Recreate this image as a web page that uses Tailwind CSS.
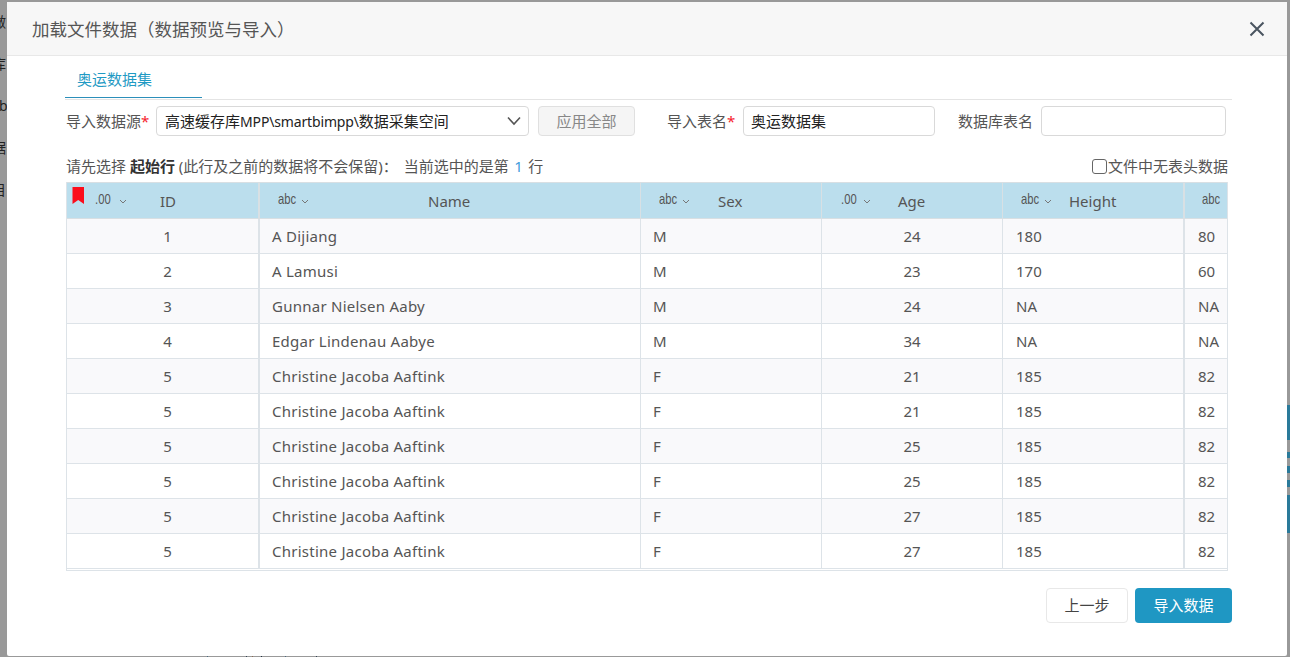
<!DOCTYPE html>
<html lang="zh-CN">
<head>
    <meta charset="UTF-8">
    <title>加载文件数据</title>
    <script src="https://cdn.jsdelivr.net/npm/@tailwindcss/browser@4"></script>
</head>
<body class="bg-[#999999] h-[657px] w-[1290px] overflow-hidden relative font-['Noto_Sans','Noto_Sans_CJK_SC',sans-serif] text-[#333333] text-[15px]">

    <!-- page behind the overlay -->
    <div class="absolute left-0 top-[12px] w-[7px] text-[14px] leading-[20px] text-[#222222] overflow-hidden">
        <div class="h-[42px] -ml-[8px] whitespace-nowrap">做</div>
        <div class="h-[42px] -ml-[8px] whitespace-nowrap">库</div>
        <div class="h-[42px] -ml-[1px] whitespace-nowrap">b</div>
        <div class="h-[42px] -ml-[8px] whitespace-nowrap">据</div>
        <div class="h-[42px] -ml-[8px] whitespace-nowrap">目</div>
    </div>
    <div class="absolute left-[1287px] top-[405px] w-[3px] flex flex-col">
        <div class="h-[35px] bg-[#2a7a9a]"></div>
        <div class="h-[12px]"></div>
        <div class="h-[6px] bg-[#2a7a9a]"></div>
        <div class="h-[8px]"></div>
        <div class="h-[7px] bg-[#2a7a9a]"></div>
        <div class="h-[7px]"></div>
        <div class="h-[7px] bg-[#2a7a9a]"></div>
        <div class="h-[8px]"></div>
        <div class="h-[38px] bg-[#2a7a9a]"></div>
    </div>
    <div class="absolute left-[207px] top-[656px] w-[1px] h-[1px] bg-[#4a6a80]"></div>
    <div class="absolute left-[246px] top-[656px] w-[1px] h-[1px] bg-[#334455]"></div>
    <div class="absolute left-[252px] top-[656px] w-[1px] h-[1px] bg-[#8a6a50]"></div>
    <div class="absolute left-[261px] top-[656px] w-[1px] h-[1px] bg-[#223344]"></div>
    <div class="absolute left-[285px] top-[656px] w-[1px] h-[1px] bg-[#4a6a80]"></div>
    <div class="absolute left-[316px] top-[656px] w-[1px] h-[1px] bg-[#334455]"></div>

    <!-- modal -->
    <div class="absolute left-[7px] top-[2px] w-[1280px] h-[654px] bg-white rounded-[2px] flex flex-col">
        <header class="h-[54px] shrink-0 bg-[#f7f7f7] border-b border-[#e8e8e8] flex items-center justify-between pl-[25px] pr-[22px]">
            <h1 class="text-[17.5px] leading-[24px] text-[#555555]">加载文件数据（数据预览与导入）</h1>
            <svg width="16" height="16" viewBox="0 0 16 16" fill="none" stroke="#4a5560" stroke-width="2">
                <path d="M1.5 1.5L14.5 14.5M14.5 1.5L1.5 14.5"/>
            </svg>
        </header>

        <div class="pl-[58px] pr-[55px] flex flex-col">
            <!-- tabs -->
            <div class="h-[44px] border-b border-[#e4e4e4] flex">
                <div class="w-[137px] h-[42px] border-b border-[#2b8fba] text-[#1f9ac4] leading-[46px] pl-[12px]">奥运数据集</div>
            </div>

            <!-- source row -->
            <div class="flex items-center h-[30px] mt-[6px] pl-[1px] pr-[6px]">
                <label class="w-[90px] text-[#555555]">导入数据源<span class="text-[#f5222d]">*</span></label>
                <div class="w-[373px] h-[30px] border border-[#d9d9d9] rounded-[4px] flex items-center justify-between pl-[8px] pr-[6px] text-[#222222]">
                    <span>高速缓存库<span class="text-[14px] tracking-[-0.15px]">MPP\smartbimpp\</span>数据采集空间</span>
                    <svg width="16" height="10" viewBox="0 0 16 10" fill="none" stroke="#555555" stroke-width="1.6"><path d="M2 1.5L8 8L14 1.5"/></svg>
                </div>
                <button class="w-[97px] h-[30px] ml-[9px] bg-[#f5f5f5] border border-[#e0e0e0] rounded-[4px] text-[#888888]">应用全部</button>
                <label class="ml-[32px] w-[76px] whitespace-nowrap text-[#555555]">导入表名<span class="text-[#f5222d]">*</span></label>
                <div class="w-[192px] h-[30px] border border-[#d9d9d9] rounded-[4px] flex items-center pl-[7px] text-[#222222]">奥运数据集</div>
                <label class="ml-[23px] w-[83px] whitespace-nowrap text-[#555555]">数据库表名</label>
                <div class="w-[185px] h-[30px] border border-[#d9d9d9] rounded-[4px]"></div>
            </div>

            <!-- start row hint -->
            <div class="flex items-center justify-between h-[20px] mt-[20px] mb-[1px] pl-[1px] pr-[4px] text-[#555555] text-[15px] leading-[20px]">
                <p>请先选择 <b class="font-bold text-[#333333]">起始行</b> (此行及之前的数据将不会保留)： <span class="ml-[2px]">当前选中的是第</span> <span class="text-[#3f9ddb] mx-[1.5px]">1</span> 行</p>
                <label class="flex items-center"><span class="w-[15px] h-[15px] mr-[1px] border border-[#666666] rounded-[3px] bg-white"></span>文件中无表头数据</label>
            </div>

            <!-- preview table -->
            <div id="preview" class="mt-[5px] ml-[1px] w-[1162px] h-[389px] border border-[#dde3e8] border-t-0 overflow-hidden">
                <div class="flex h-[37px] bg-[#bbdeed] border-y border-[#d8dfe3] text-[#555555] text-[15px]">
                    <div class="w-[193px] border-r-2 border-[#d8e0e4] relative flex items-center">
                        <svg class="absolute left-[5px] top-[4px]" width="13" height="18" viewBox="0 0 13 18"><path d="M0.5 0H12V17L6.2 13L0.5 17Z" fill="#fb0d1b"/></svg>
                        <span class="absolute left-[28px] top-[8px] text-[15px] leading-[16px] scale-x-75 origin-left font-['Liberation_Sans',sans-serif]">.00</span>
                        <svg class="absolute left-[52px] top-[16px]" width="8" height="5" viewBox="0 0 8 5" fill="none" stroke="#777777"><path d="M1 1L4 4L7 1"/></svg>
                        <span class="absolute left-[93px] top-[7px] leading-[22px]">ID</span>
                    </div>
                    <div class="w-[381px] border-r border-[#d8e0e4] relative">
                        <span class="absolute left-[18px] top-[8px] text-[15px] leading-[16px] scale-x-75 origin-left font-['Liberation_Sans',sans-serif]">abc</span>
                        <svg class="absolute left-[41px] top-[16px]" width="8" height="5" viewBox="0 0 8 5" fill="none" stroke="#777777"><path d="M1 1L4 4L7 1"/></svg>
                        <span class="absolute left-[168px] top-[7px] leading-[22px]">Name</span>
                    </div>
                    <div class="w-[181px] border-r border-[#d8e0e4] relative">
                        <span class="absolute left-[18px] top-[8px] text-[15px] leading-[16px] scale-x-75 origin-left font-['Liberation_Sans',sans-serif]">abc</span>
                        <svg class="absolute left-[41px] top-[16px]" width="8" height="5" viewBox="0 0 8 5" fill="none" stroke="#777777"><path d="M1 1L4 4L7 1"/></svg>
                        <span class="absolute left-[77px] top-[7px] leading-[22px]">Sex</span>
                    </div>
                    <div class="w-[181px] border-r border-[#d8e0e4] relative">
                        <span class="absolute left-[19px] top-[8px] text-[15px] leading-[16px] scale-x-75 origin-left font-['Liberation_Sans',sans-serif]">.00</span>
                        <svg class="absolute left-[41px] top-[16px]" width="8" height="5" viewBox="0 0 8 5" fill="none" stroke="#777777"><path d="M1 1L4 4L7 1"/></svg>
                        <span class="absolute left-[76px] top-[7px] leading-[22px]">Age</span>
                    </div>
                    <div class="w-[182px] border-r-2 border-[#d8e0e4] relative">
                        <span class="absolute left-[18px] top-[8px] text-[15px] leading-[16px] scale-x-75 origin-left font-['Liberation_Sans',sans-serif]">abc</span>
                        <svg class="absolute left-[41px] top-[16px]" width="8" height="5" viewBox="0 0 8 5" fill="none" stroke="#777777"><path d="M1 1L4 4L7 1"/></svg>
                        <span class="absolute left-[66px] top-[7px] leading-[22px]">Height</span>
                    </div>
                    <div class="flex-1 relative overflow-hidden">
                        <span class="absolute left-[17px] top-[8px] text-[15px] leading-[16px] scale-x-75 origin-left font-['Liberation_Sans',sans-serif]">abc</span>
                    </div>
                </div>
                <div id="rows"></div>
            </div>

            <!-- footer buttons -->
            <div class="flex justify-end gap-[7px] mt-[17px]">
                <button class="w-[82px] h-[35px] border border-[#e8e8e8] rounded-[4px] bg-white text-[#444444]">上一步</button>
                <button class="w-[97px] h-[35px] rounded-[4px] bg-[#1f97c3] text-white">导入数据</button>
            </div>
        </div>
    </div>

    <script>
        const data = [
            ['1', 'A Dijiang', 'M', '24', '180', '80'],
            ['2', 'A Lamusi', 'M', '23', '170', '60'],
            ['3', 'Gunnar Nielsen Aaby', 'M', '24', 'NA', 'NA'],
            ['4', 'Edgar Lindenau Aabye', 'M', '34', 'NA', 'NA'],
            ['5', 'Christine Jacoba Aaftink', 'F', '21', '185', '82'],
            ['5', 'Christine Jacoba Aaftink', 'F', '21', '185', '82'],
            ['5', 'Christine Jacoba Aaftink', 'F', '25', '185', '82'],
            ['5', 'Christine Jacoba Aaftink', 'F', '25', '185', '82'],
            ['5', 'Christine Jacoba Aaftink', 'F', '27', '185', '82'],
            ['5', 'Christine Jacoba Aaftink', 'F', '27', '185', '82']
        ];
        const rows = document.getElementById('rows');
        data.forEach((r, i) => {
            const row = document.createElement('div');
            row.className = 'flex h-[35px] border-b border-[#dde3e8] leading-[35px] text-[#555555] ' + (i % 2 === 0 ? 'bg-[#f9f9fb]' : 'bg-white');
            row.innerHTML =
                `<div class="w-[193px] border-r-2 border-[#dde3e8] text-center pl-[10px]">${r[0]}</div>` +
                `<div class="w-[381px] border-r border-[#dde3e8] pl-[12px] tracking-[0.25px]">${r[1]}</div>` +
                `<div class="w-[181px] border-r border-[#dde3e8] pl-[12px]">${r[2]}</div>` +
                `<div class="w-[181px] border-r border-[#dde3e8] text-center">${r[3]}</div>` +
                `<div class="w-[182px] border-r-2 border-[#dde3e8] pl-[13px]">${r[4]}</div>` +
                `<div class="flex-1 pl-[13px]">${r[5]}</div>`;
            rows.appendChild(row);
        });
    </script>
</body>
</html>
